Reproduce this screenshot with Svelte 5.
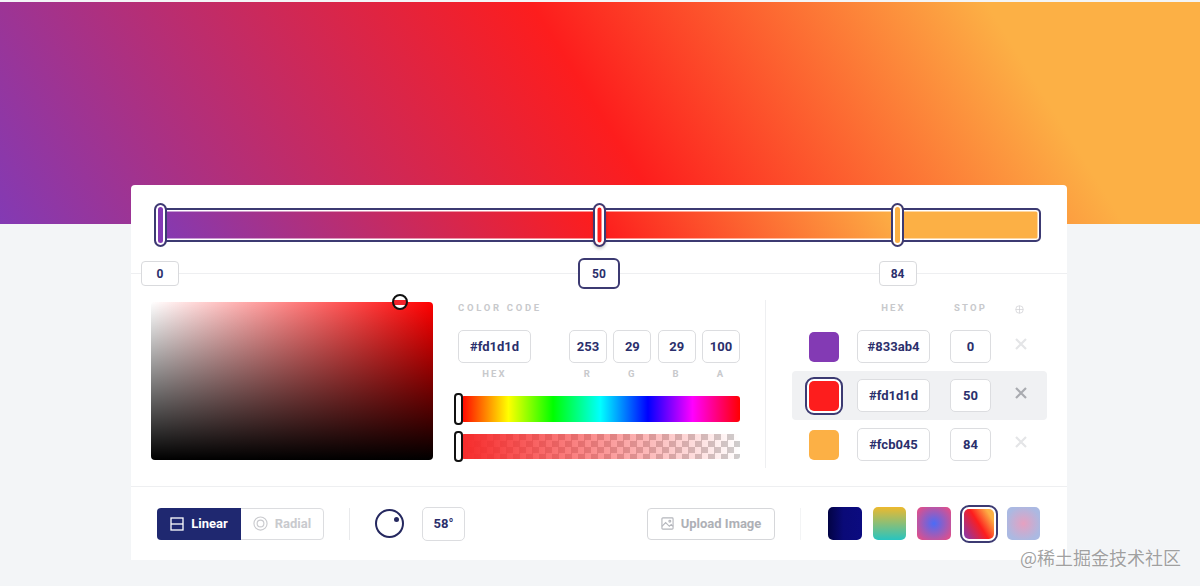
<script>
  const gradient = 'linear-gradient(58deg, #833ab4 0%, #fd1d1d 50%, #fcb045 84%)';
  const stops = [
    { hex: '#833ab4', stop: 0 },
    { hex: '#fd1d1d', stop: 50, active: true },
    { hex: '#fcb045', stop: 84 }
  ];
  const rgba = [
    { label: 'R', value: 253 },
    { label: 'G', value: 29 },
    { label: 'B', value: 29 },
    { label: 'A', value: 100 }
  ];
  const presets = [
    { bg: 'linear-gradient(to right, #020344, #0a0a78 45%, #0b0b80)' },
    { bg: 'linear-gradient(to bottom, #edb92e, #27c4c0)' },
    { bg: 'radial-gradient(circle, #4a6cf7 0%, #d9508f 85%)' },
    { bg: gradient, active: true },
    { bg: 'radial-gradient(circle, #e6a0c0 0%, #abb9e2 75%)' }
  ];
</script>

<div class="page">
  <div class="hero" style:background={gradient}></div>

  <main class="card">
    <section class="track-row">
      <div class="track" style:background-image={gradient}>
        {#each stops as s}
          <span class="handle" class:on={s.active} style:left="{3 + s.stop * 8.78}px" style:--c={s.hex}></span>
          <span class="stop-label" class:on={s.active} style:left="{3 + s.stop * 8.78}px">{s.stop}</span>
        {/each}
      </div>
    </section>

    <section class="editor">
      <div class="picker">
        <span class="picker-dot"></span>
      </div>

      <div class="code">
        <div class="caption code-title">COLOR CODE</div>
        <div class="fields">
          <div class="field hex-field">
            <div class="box">#fd1d1d</div>
            <div class="caption">HEX</div>
          </div>
          <div class="rgba">
            {#each rgba as c}
              <div class="field">
                <div class="box">{c.value}</div>
                <div class="caption">{c.label}</div>
              </div>
            {/each}
          </div>
        </div>
        <div class="slider hue"><span class="thumb"></span></div>
        <div class="slider alpha"><span class="thumb"></span></div>
      </div>

      <div class="list">
        <div class="list-head">
          <span></span>
          <span class="caption">HEX</span>
          <span class="caption">STOP</span>
          <svg class="add" viewBox="0 0 10 10" width="9" height="9" fill="none" stroke="#d0d0d4" stroke-width="0.8">
            <circle cx="5" cy="5" r="4.2" />
            <path d="M5 1v8M1 5h8" />
          </svg>
        </div>
        {#each stops as s}
          <div class="list-row" class:on={s.active}>
            <span class="swatch" style:background={s.hex}></span>
            <div class="box">{s.hex}</div>
            <div class="box">{s.stop}</div>
            <svg class="remove" viewBox="0 0 12 12" width="12" height="12" fill="none" stroke-width="2.2">
              <path d="M1 1l10 10M11 1L1 11" />
            </svg>
          </div>
        {/each}
      </div>
    </section>

    <section class="footer">
      <div class="tabs">
        <div class="tab on">
          <svg viewBox="0 0 14 14" width="14" height="14" fill="none" stroke="#fff" stroke-width="1.3">
            <rect x="1" y="1" width="12" height="12" />
            <path d="M1 7h12" />
          </svg>
          Linear
        </div>
        <div class="tab">
          <svg viewBox="0 0 16 16" width="15" height="15" fill="none" stroke="#c9cace" stroke-width="1.2">
            <circle cx="8" cy="8" r="7" />
            <circle cx="8" cy="8" r="3.6" />
          </svg>
          Radial
        </div>
      </div>
      <span class="sep"></span>
      <div class="dial"><span class="dial-dot"></span></div>
      <div class="box angle">58°</div>
      <div class="upload">
        <svg viewBox="0 0 14 14" width="13" height="13" fill="none" stroke="#b4b6bc" stroke-width="1.2">
          <rect x="1" y="1" width="12" height="12" rx="1" />
          <path d="M1 10l4-4 4 4 2-2 2 2" />
          <circle cx="9.5" cy="4.5" r="1" />
        </svg>
        Upload Image
      </div>
      <span class="sep sep-light"></span>
      <div class="presets">
        {#each presets as p}
          <span class="preset" class:on={p.active} style:background={p.bg}></span>
        {/each}
      </div>
    </section>
  </main>

  <div class="watermark">@稀土掘金技术社区</div>
</div>

<style>
  :global(body) {
    background: #f3f5f7;
  }

  .page {
    position: relative;
    height: 586px;
    overflow: hidden;
    padding-top: 2px;
    box-sizing: border-box;
    font-family: Roboto, "Liberation Sans", sans-serif;
    color: #2b2f6c;
  }

  .hero {
    height: 222px;
  }

  .card {
    width: 936px;
    height: 375px;
    margin: -39px 0 0 131px;
    background: #fff;
    border-radius: 4px 4px 0 0;
  }

  /* gradient track */
  .track-row {
    height: 89px;
    box-sizing: border-box;
    padding: 23px 26px 0 24px;
    border-bottom: 1px solid #eeeff1;
  }

  .track {
    position: relative;
    height: 34px;
    box-sizing: border-box;
    border: 2px solid #3c3a72;
    border-radius: 5px;
    box-shadow: inset 0 0 0 1.5px #fff;
    background-clip: padding-box;
  }

  .handle {
    position: absolute;
    top: -7px;
    width: 13px;
    height: 44px;
    margin-left: -6.5px;
    box-sizing: border-box;
    border: 2px solid #3c3a72;
    border-radius: 7px;
    background: var(--c);
    box-shadow: inset 0 0 0 2px #fff;
  }

  .handle.on {
    box-shadow: inset 0 0 0 2.5px #fff, 0 2px 3px rgba(0, 0, 0, 0.2);
  }

  .stop-label {
    position: absolute;
    top: 51px;
    width: 38px;
    height: 25px;
    margin-left: -19px;
    box-sizing: border-box;
    display: flex;
    align-items: center;
    justify-content: center;
    background: #fff;
    border: 1px solid #d9dadd;
    border-radius: 4px;
    font-size: 12px;
    font-weight: 700;
  }

  .stop-label.on {
    top: 48px;
    width: 42px;
    height: 31px;
    margin-left: -21px;
    border: 2px solid #3c3a72;
    border-radius: 6px;
  }

  /* middle part */
  .editor {
    height: 212px;
    box-sizing: border-box;
    padding: 28px 0 0 20px;
    display: flex;
    gap: 25px;
  }

  .picker {
    position: relative;
    width: 282px;
    height: 158px;
    border-radius: 4px;
    background:
      linear-gradient(to top, #000, transparent),
      linear-gradient(to right, #fff, #f00);
  }

  .picker-dot {
    position: absolute;
    top: -8px;
    left: 241px;
    width: 16px;
    height: 16px;
    box-sizing: border-box;
    border: 2.5px solid #111;
    border-radius: 50%;
    background: linear-gradient(to bottom, #fff 36%, #f0222a 36%, #f0222a 78%, #fff 78%);
  }

  .code {
    width: 282px;
  }

  .caption {
    font-size: 9.5px;
    font-weight: 700;
    letter-spacing: 2.2px;
    color: #c8c9cc;
    text-align: center;
  }

  .code-title {
    text-align: left;
    line-height: 11px;
    margin-bottom: 17px;
    letter-spacing: 2.7px;
  }

  .fields {
    display: flex;
    justify-content: space-between;
  }

  .rgba {
    display: flex;
    gap: 6.33px;
  }

  .box {
    box-sizing: border-box;
    height: 33px;
    display: flex;
    align-items: center;
    justify-content: center;
    background: #fff;
    border: 1px solid #dcdde0;
    border-radius: 5px;
    font-size: 13px;
    font-weight: 700;
  }

  .field {
    width: 38px;
  }

  .hex-field {
    width: 73px;
  }

  .field .caption {
    margin-top: 5px;
    line-height: 11px;
  }

  .slider {
    position: relative;
    height: 25px;
    margin-left: 3px;
    border-radius: 3px;
  }

  .hue {
    margin-top: 17px;
    height: 26px;
    background: linear-gradient(to right, #f00, #ff0 17%, #0f0 33%, #0ff 50%, #00f 67%, #f0f 83%, #f00);
  }

  .alpha {
    margin-top: 12px;
    background:
      linear-gradient(to right, #f62a2a, rgba(253, 29, 29, 0)),
      repeating-conic-gradient(#cfcdcd 0 25%, #fff 0 50%) 0 0 / 13px 13px;
  }

  .thumb {
    position: absolute;
    top: -3px;
    left: -7px;
    width: 9px;
    height: calc(100% + 6px);
    box-sizing: border-box;
    border: 2px solid #111;
    border-radius: 4px;
    background: #fff;
  }

  /* stop list */
  .list {
    margin-top: -2px;
    height: 168px;
    padding-left: 26px;
    border-left: 1px solid #eeeff1;
  }

  .list-head,
  .list-row {
    display: grid;
    grid-template-columns: 65px 73px 61px 56px;
    width: 255px;
    align-items: center;
  }

  .list-head > :nth-child(3),
  .list-row > :nth-child(3) {
    margin-left: 20px;
  }

  .list-head {
    height: 22px;
    align-items: start;
    padding-top: 2px;
    box-sizing: border-box;
  }

  .list-head .caption {
    line-height: 11px;
  }

  .list-row {
    height: 49px;
  }

  .list-row.on {
    background: #f0f1f3;
    border-radius: 4px;
  }

  .list-head .add {
    margin: 3px 0 0 24px;
  }

  .swatch {
    width: 30px;
    height: 30px;
    margin-left: 17px;
    border-radius: 5px;
  }

  .list-row.on .swatch {
    outline: 2px solid #3c3a72;
    outline-offset: 2px;
    box-shadow: 0 0 0 2px #fff;
  }

  .remove {
    margin-left: 24px;
    margin-top: -5px;
    stroke: #e4e5e7;
  }

  .list-row.on .remove {
    stroke: #a9abb0;
  }

  /* bottom bar */
  .footer {
    height: 74px;
    box-sizing: border-box;
    border-top: 1px solid #eeeff1;
    padding: 0 0 0 26px;
    display: flex;
    align-items: center;
  }

  .tabs {
    display: flex;
    width: 167px;
    height: 32px;
    box-sizing: border-box;
    border: 1px solid #dcdde0;
    border-radius: 4px;
  }

  .tab {
    flex: 1;
    display: flex;
    align-items: center;
    justify-content: center;
    gap: 7px;
    font-size: 13px;
    font-weight: 700;
    color: #c9cace;
  }

  .tab.on {
    flex: none;
    width: 84px;
    margin: -1px 0 -1px -1px;
    background: #1f2870;
    border-radius: 4px 0 0 4px;
    color: #fff;
  }

  .sep {
    width: 1px;
    height: 32px;
    margin: 0 25px;
    background: #e9eaec;
  }

  .dial {
    position: relative;
    width: 29px;
    height: 29px;
    box-sizing: border-box;
    border: 2px solid #25285f;
    border-radius: 50%;
    margin-right: 18px;
  }

  .dial-dot {
    position: absolute;
    top: 6px;
    left: 17px;
    width: 5px;
    height: 5px;
    border-radius: 50%;
    background: #25285f;
  }

  .angle {
    width: 43px;
    height: 34px;
  }

  .upload {
    margin-left: 182px;
    width: 128px;
    height: 32px;
    box-sizing: border-box;
    border: 1px solid #d6d7da;
    border-radius: 4px;
    display: flex;
    align-items: center;
    justify-content: center;
    gap: 7px;
    font-size: 13px;
    font-weight: 700;
    color: #aeb0b6;
  }

  .sep-light {
    background: #f3f4f5;
  }

  .presets {
    display: flex;
    gap: 11px;
    margin-left: 2px;
  }

  .preset {
    width: 33.5px;
    height: 33px;
    border-radius: 5px;
  }

  .preset.on {
    width: 30px;
    height: 30px;
    margin: 1.5px 2px;
    outline: 2px solid #3c3a72;
    outline-offset: 2px;
    box-shadow: 0 0 0 2px #fff;
  }

  .watermark {
    position: absolute;
    left: 1020px;
    top: 545px;
    font-family: "Noto Sans CJK SC", sans-serif;
    font-size: 18px;
    line-height: 24px;
    color: rgba(120, 120, 120, 0.7);
    text-shadow: 0 0 2px rgba(255, 255, 255, 0.8);
  }
</style>
